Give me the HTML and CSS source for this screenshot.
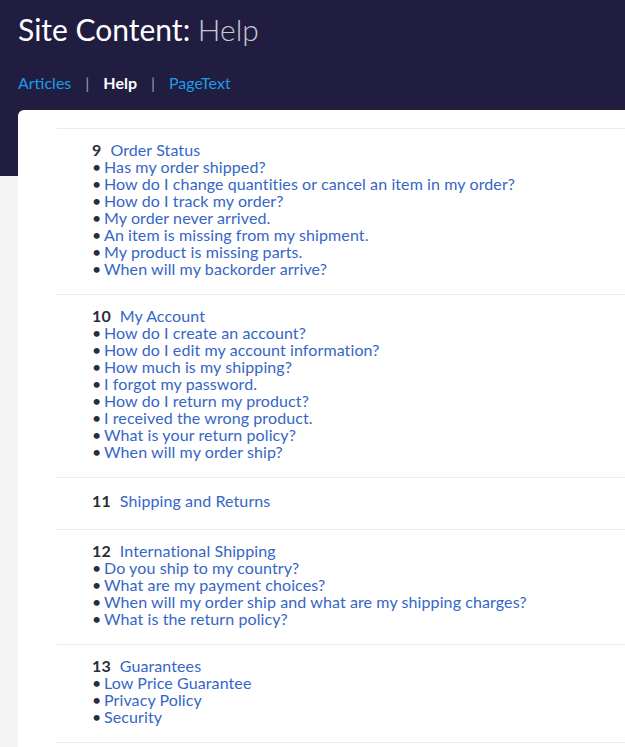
FILE: index.html
```html
<!DOCTYPE html>
<html lang="en">
<head>
<meta charset="utf-8">
<title>Site Content: Help</title>
<link rel="stylesheet" href="styles.css">
</head>
<body>
<header class="top">
  <h1 class="title">Site Content: <span class="title-light">Help</span></h1>
  <nav class="tabs">
    <a class="tab" href="#">Articles</a>
    <span class="sep">|</span>
    <a class="tab active" href="#">Help</a>
    <span class="sep">|</span>
    <a class="tab" href="#">PageText</a>
  </nav>
</header>
<main class="card">
  <div class="list">
    <section class="group">
      <div class="head"><span class="num">9</span><a href="#">Order Status</a></div>
      <ul class="items">
        <li><a href="#">Has my order shipped?</a></li>
        <li><a href="#">How do I change quantities or cancel an item in my order?</a></li>
        <li><a href="#">How do I track my order?</a></li>
        <li><a href="#">My order never arrived.</a></li>
        <li><a href="#">An item is missing from my shipment.</a></li>
        <li><a href="#">My product is missing parts.</a></li>
        <li><a href="#">When will my backorder arrive?</a></li>
      </ul>
    </section>
    <section class="group">
      <div class="head"><span class="num">10</span><a href="#">My Account</a></div>
      <ul class="items">
        <li><a href="#">How do I create an account?</a></li>
        <li><a href="#">How do I edit my account information?</a></li>
        <li><a href="#">How much is my shipping?</a></li>
        <li><a href="#">I forgot my password.</a></li>
        <li><a href="#">How do I return my product?</a></li>
        <li><a href="#">I received the wrong product.</a></li>
        <li><a href="#">What is your return policy?</a></li>
        <li><a href="#">When will my order ship?</a></li>
      </ul>
    </section>
    <section class="group group-empty">
      <div class="head"><span class="num">11</span><a href="#">Shipping and Returns</a></div>
    </section>
    <section class="group">
      <div class="head"><span class="num">12</span><a href="#">International Shipping</a></div>
      <ul class="items">
        <li><a href="#">Do you ship to my country?</a></li>
        <li><a href="#">What are my payment choices?</a></li>
        <li><a href="#">When will my order ship and what are my shipping charges?</a></li>
        <li><a href="#">What is the return policy?</a></li>
      </ul>
    </section>
    <section class="group">
      <div class="head"><span class="num">13</span><a href="#">Guarantees</a></div>
      <ul class="items">
        <li><a href="#">Low Price Guarantee</a></li>
        <li><a href="#">Privacy Policy</a></li>
        <li><a href="#">Security</a></li>
      </ul>
    </section>
  </div>
</main>
</body>
</html>
```
FILE: styles.css
```css
* { box-sizing: border-box; }

body {
  margin: 0;
  font-family: Lato, "Open Sans", Arial, sans-serif;
  background: linear-gradient(to bottom, #201d41 0, #201d41 176px, #f3f3f3 176px);
  min-height: 747px;
}

.top {
  padding: 11px 18px 0;
}

.title {
  margin: 0;
  font-size: 30px;
  line-height: 36px;
  font-weight: 400;
  color: #ffffff;
}

.title-light {
  font-weight: 300;
  color: #c9c8d4;
}

.tabs {
  margin-top: 27px;
  display: flex;
  align-items: center;
  gap: 14px;
  font-size: 16px;
  line-height: 18px;
}

.tab {
  color: #1e9be8;
  text-decoration: none;
  font-weight: 400;
}

.tab.active {
  color: #ffffff;
  font-weight: 700;
}

.sep {
  color: #9c9ab0;
}

.card {
  margin: 18px 0 0 18px;
  background: #ffffff;
  border-top-left-radius: 6px;
  padding: 18px 0 0 39px;
  min-height: 640px;
}

.list {
  border-bottom: 1px solid #ececec;
}

.group {
  border-top: 1px solid #ececec;
  padding: 12px 0 17px 35px;
  font-size: 16px;
  line-height: 17px;
  letter-spacing: 0.1px;
}

.group-empty {
  padding-top: 14px;
  padding-bottom: 20px;
}

.head {
  display: flex;
}

.num {
  font-weight: 700;
  color: #2d2d38;
  margin-right: 9px;
}

.group a {
  color: #3566c6;
  text-decoration: none;
}

.items {
  list-style: none;
  margin: 0;
  padding: 0;
}

.items li {
  display: flex;
}

.items li::before {
  content: "\2022";
  color: #2d2d38;
  width: 12px;
  flex: none;
}
```
